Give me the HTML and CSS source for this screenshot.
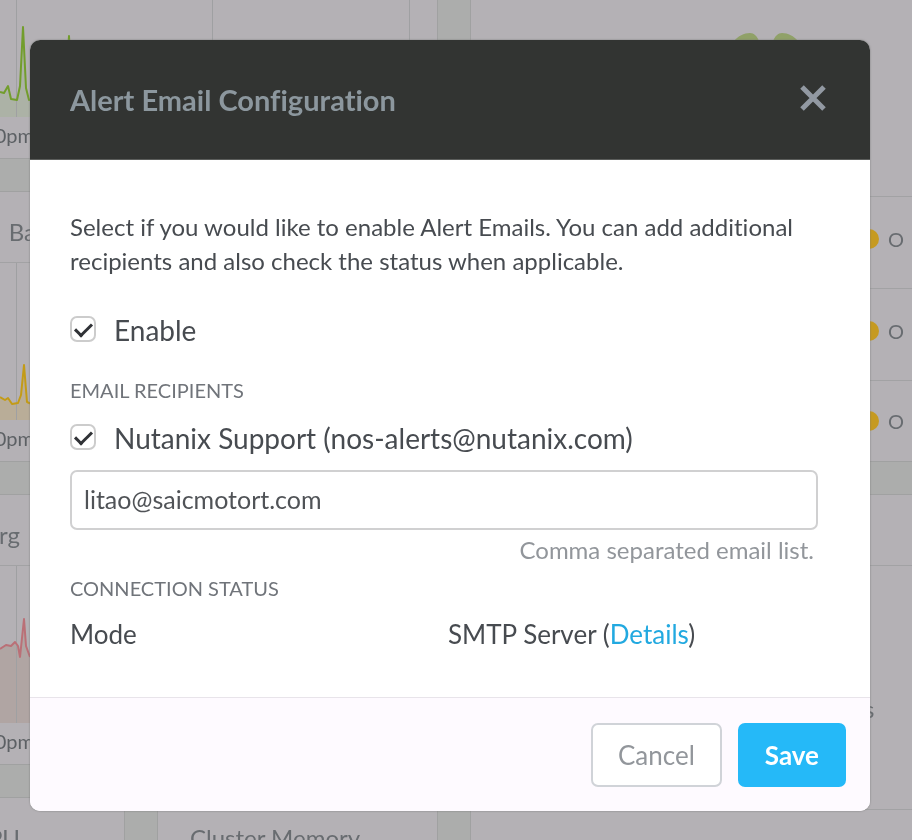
FILE: index.html
```html
<!DOCTYPE html>
<html lang="en">
<head>
<meta charset="utf-8">
<title>Alert Email Configuration</title>
<link rel="stylesheet" href="styles.css">
</head>
<body>
<div class="dashboard" aria-hidden="true">
  <div class="column charts">
    <section class="card">
      <div class="plot first">
        <svg class="line green" width="437" height="117" viewBox="0 0 437 117">
          <path class="area" d="M0 92L4 93L8 86L11 99L17 100L20 86L23 27L26 88L29 100L60 96L66 80L69 36L72 92L80 100V117H0Z"/>
          <path class="grid" d="M16.500 0V117M212.500 0V117M409.500 0V117"/>
          <path class="stroke" d="M0 92L4 93L8 86L11 99L17 100L20 86L23 27L26 88L29 100L60 96L66 80L69 36L72 92L80 100"/>
        </svg>
      </div>
      <div class="axis"><span>0pm</span></div>
    </section>
    <section class="card">
      <h2 class="card-title"><span class="tail wide">Ba</span></h2>
      <div class="plot">
        <svg class="line yellow" width="437" height="157" viewBox="0 0 437 157">
          <path class="area" d="M0 134L5 137L8 135L12 141L18 140L21 132L24 102L27 139L34 142V157H0Z"/>
          <path class="grid" d="M16.500 0V157M212.500 0V157M409.500 0V157"/>
          <path class="stroke" d="M0 134L5 137L8 135L12 141L18 140L21 132L24 102L27 139L34 142"/>
        </svg>
      </div>
      <div class="axis"><span>0pm</span></div>
    </section>
    <section class="card">
      <h2 class="card-title"><span class="tail">rg</span></h2>
      <div class="plot">
        <svg class="line red" width="437" height="157" viewBox="0 0 437 157">
          <path class="area" d="M0 83L6 79L11 80L15 76L18 80L20 91L24 53L26 80L30 91V157H0Z"/>
          <path class="grid" d="M16.500 0V157M212.500 0V157M409.500 0V157"/>
          <path class="stroke" d="M0 83L6 79L11 80L15 76L18 80L20 91L24 53L26 80L30 91"/>
        </svg>
      </div>
      <div class="axis"><span>0pm</span></div>
    </section>
    <div class="pair">
      <section class="card"><h2 class="card-title"><span class="tail">PU</span></h2></section>
      <section class="card"><h2 class="card-title padded">Cluster Memory</h2></section>
    </div>
  </div>
  <div class="column side">
    <section class="card">
      <div class="health">
        <svg width="66" height="60" viewBox="0 0 66 60"><path d="M1 8C5 3 11 0 17 0C21 0 24 3 26 8L33 22L40 8C42 3 45 0 49 0C55 0 61 3 65 8C68 22 60 32 33 58C6 32 -2 22 1 8Z"/></svg>
      </div>
      <div class="stat"><i class="dot"></i><span>O</span></div>
      <div class="stat"><i class="dot"></i><span>O</span></div>
      <div class="stat last"><i class="dot"></i><span>O</span></div>
    </section>
    <section class="card">
      <div class="card-title"></div>
      <div class="events"><span>s</span></div>
      <div class="more"></div>
    </section>
  </div>
</div>

<form class="modal" role="dialog" aria-labelledby="modal-title">
  <header class="modal-header">
    <h1 id="modal-title">Alert Email Configuration</h1>
    <button class="close" type="button" aria-label="Close">
      <svg width="28" height="26" viewBox="0 0 28 26"><path d="M3 2L25 24M25 2L3 24"/></svg>
    </button>
  </header>
  <div class="modal-body">
    <p class="intro">Select if you would like to enable Alert Emails. You can add additional recipients and also check the status when applicable.</p>
    <label class="check"><input type="checkbox" checked><span>Enable</span></label>
    <h2 class="section">EMAIL RECIPIENTS</h2>
    <label class="check"><input type="checkbox" checked><span>Nutanix Support (nos-alerts@nutanix.com)</span></label>
    <input class="emails" type="text" aria-label="Email recipients" aria-describedby="hint" value="litao@saicmotort.com">
    <p class="hint" id="hint">Comma separated email list.</p>
    <h2 class="section status">CONNECTION STATUS</h2>
    <div class="mode">
      <span>Mode</span>
      <span>SMTP Server (<a href="#">Details</a>)</span>
    </div>
  </div>
  <footer class="modal-footer">
    <button class="btn" type="button">Cancel</button>
    <button class="btn primary" type="submit">Save</button>
  </footer>
</form>
</body>
</html>
```
FILE: styles.css
```css
* { box-sizing: border-box; }
body {
  margin: 0;
  font-family: Lato, "Liberation Sans", sans-serif;
  font-variant-ligatures: none;
  color: #474b50;
  background: #acadac;
}
h1, h2, p { margin: 0; font-weight: 400; }

/* Dimmed dashboard behind the dialog */
.dashboard {
  display: flex;
  gap: 34px;
  position: fixed;
  inset: 0;
  overflow: hidden;
  color: #686c70;
}
.column { display: flex; flex-direction: column; gap: 34px; }
.charts { flex: 0 0 437px; }
.side { flex: 1; min-width: 0; }
.card { background: #b4b1b5; box-shadow: 0 0 0 1px #a0a1a1; }
.card-title {
  height: 71px;
  padding-top: 8px;
  line-height: 64px;
  font-size: 24px;
  border-bottom: 1px solid #a2a2a4;
}
.tail { display: flex; justify-content: flex-end; width: 20px; }
.tail.wide { width: 36px; }
.padded { padding-left: 32px; }
.plot { height: 157px; border-bottom: 1px solid #969699; }
.plot.first { height: 117px; }
.plot svg { display: block; }
.axis { height: 41px; line-height: 36px; font-size: 20px; color: #5c6064; }
.axis span { display: flex; justify-content: flex-end; width: 34px; }
.line path { fill: none; }
.line .grid { stroke: #9fa0a2; }
.line .stroke { stroke-width: 2; stroke-linejoin: round; }
.line.green .stroke { stroke: #729d2c; }
.line.green .area { fill: #acb2a6; }
.line.yellow .stroke { stroke: #c39b17; }
.line.yellow .area { fill: #b9ad98; }
.line.red .stroke { stroke: #ba7077; }
.line.red .area { fill: #b0a5a3; }
.pair { display: grid; grid-template-columns: 124px 1fr; gap: 34px; }
.pair .card { min-height: 120px; }

.health { height: 197px; padding: 33px 0 0 262px; border-bottom: 1px solid #a2a2a4; }
.health path { fill: #90a168; }
.stat {
  display: flex;
  align-items: center;
  gap: 9px;
  height: 92px;
  padding: 0 0 8px 388px;
  font-size: 20px;
  border-bottom: 1px solid #a2a2a4;
}
.stat.last { height: 80px; padding-bottom: 0; border: 0; }
.dot { flex: none; width: 20px; height: 20px; border-radius: 50%; background: #c69a20; }
.events { display: flex; height: 244px; padding: 128px 0 0 393px; font-size: 24px; border-bottom: 1px solid #a2a2a4; }
.more { height: 100px; }

/* Dialog */
.modal {
  position: relative;
  margin: 40px 42px 30px 30px;
  border-radius: 10px;
  background: #fff;
  box-shadow: 0 0 2px #777;
  overflow: hidden;
}
.modal-header {
  display: flex;
  align-items: center;
  justify-content: space-between;
  height: 120px;
  padding: 0 43px 0 40px;
  background: #323432;
  color: #8c979e;
  border-bottom: 1px solid #5b5d5b;
}
.modal-header h1 { font-size: 29px; font-weight: 700; }
.close { padding: 0 0 4px; border: 0; background: none; }
.close svg { display: block; }
.close path { stroke: #9299a2; stroke-width: 5; }
.modal-body { padding: 50px 52px 45px 40px; }
.intro { font-size: 24px; line-height: 34px; }
.check { display: flex; align-items: center; gap: 18px; height: 36px; font-size: 28px; }
.intro + .check { margin-top: 34px; }
.check input {
  appearance: none;
  flex: none;
  width: 26px;
  height: 26px;
  margin: 0 0 2px;
  border: 2px solid #ccc;
  border-radius: 7px;
  display: grid;
  place-items: center;
}
.check input:checked::before {
  content: "";
  width: 14px;
  height: 7px;
  margin-bottom: 3px;
  border: solid #303236;
  border-width: 0 0 3px 3px;
  rotate: -45deg;
}
.section { font-size: 20px; line-height: 24px; color: #70747a; }
.check + .section { margin: 30px 0 18px; }
.emails {
  display: block;
  width: 100%;
  height: 60px;
  margin-top: 14px;
  padding: 0 12px 2px;
  border: 2px solid #d0d0d1;
  border-radius: 7px;
  font: inherit;
  font-size: 25px;
  color: #505357;
}
.hint { padding: 5px 4px 0 0; font-size: 24px; line-height: 30px; text-align: right; color: #92969b; }
.section.status { margin-top: 11px; }
.mode { display: grid; grid-template-columns: 1fr 1fr; gap: 8px; margin-top: 16px; line-height: 36px; font-size: 26px; }
.mode a { color: #22a9e0; text-decoration: none; }
.modal-footer {
  display: flex;
  justify-content: flex-end;
  gap: 16px;
  padding: 25px 24px 24px;
  background: #fefaff;
  border-top: 1px solid #e8e4ea;
}
.btn {
  height: 64px;
  padding: 0 25px;
  border: 2px solid #d0d3d8;
  border-radius: 7px;
  background: #fff;
  color: #92969b;
  font: 26px Lato, "Liberation Sans", sans-serif;
}
.btn.primary { border-color: #25b9f8; background: #25b9f8; color: #fff; font-weight: 700; }
```
